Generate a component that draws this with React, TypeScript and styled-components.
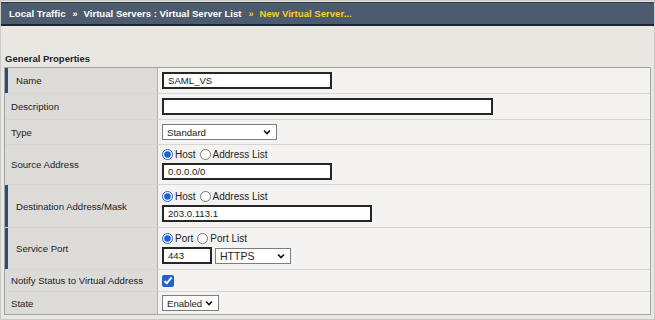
import React from "react"
import styled, { createGlobalStyle } from "styled-components"

const GlobalStyle = createGlobalStyle`
  html, body {
    margin: 0;
    padding: 0;
    background: #e8e7e2;
  }
  * {
    box-sizing: border-box;
  }
`

const Frame = styled.div`
  width: 655px;
  height: 320px;
  border: 1px solid #c9c9c6;
  background: #e8e7e2;
  font-family: "Liberation Sans", Arial, sans-serif;
  font-size: 9.6px;
  color: #222;
  overflow: hidden;
`

const Header = styled.div`
  display: flex;
  align-items: center;
  height: 24px;
  margin-top: 1px;
  padding-left: 8px;
  background: #4d5b6e;
  border-top: 1px solid #2c3849;
  border-bottom: 2px solid #1d2633;
  font-weight: bold;
  font-size: 9.6px;
  color: #fff;
  white-space: pre;
`

const Crumb = styled.span<{ $current?: boolean }>`
  color: ${(p) => (p.$current ? "#f7d21a" : "#ffffff")};
`

const Sep = styled.span<{ $current?: boolean }>`
  margin: 0 6px 0 7px;
  font-size: 9px;
  color: ${(p) => (p.$current ? "#f7d21a" : "#ffffff")};
`

const SectionTitle = styled.div`
  padding: 27px 0 0 4px;
  height: 41px;
  font-weight: bold;
  font-size: 9.5px;
  color: #222;
`

const Table = styled.div`
  margin: 0 3px 0 3px;
  border: 1px solid #a3a3a0;
  background: #f4f3f1;
`

const Row = styled.div<{ $h: number }>`
  display: flex;
  height: ${(p) => p.$h}px;
  border-bottom: 1px solid #d6d5d1;

  &:last-child {
    border-bottom: none;
  }
`

const Label = styled.div<{ $required?: boolean }>`
  display: flex;
  align-items: center;
  width: 153px;
  flex-shrink: 0;
  background: #dcdbd7;
  border-right: 1px solid #b2b1ad;
  padding-left: ${(p) => (p.$required ? "8px" : "6px")};
  border-left: ${(p) => (p.$required ? "3px solid #1f4f8f" : "none")};
`

const Value = styled.div`
  display: flex;
  flex-direction: column;
  justify-content: center;
  gap: 3px;
  padding-left: 4px;
  flex: 1;
`

const TextBox = styled.div<{ $w: number }>`
  display: flex;
  align-items: center;
  width: ${(p) => p.$w}px;
  height: 17px;
  padding-left: 4px;
  background: #fff;
  border: 2px solid #262626;
  color: #222;
`

const InlineRow = styled.div`
  display: flex;
  align-items: center;
  gap: 3px;
`

const RadioLabel = styled.label`
  display: flex;
  align-items: center;
`

const Radio = styled.input.attrs({ type: "radio" })`
  width: 11px;
  height: 11px;
  margin: 0 2px 0 0;
  accent-color: #1a62d8;
`

const RadioText = styled.span`
  font-size: 10px;
  margin-right: 1px;
`

const Check = styled.input.attrs({ type: "checkbox" })`
  width: 12px;
  height: 12px;
  margin: 0;
  accent-color: #1f5fcf;
`

const SelectBox = styled.div<{ $w: number; $large?: boolean }>`
  display: flex;
  align-items: center;
  justify-content: space-between;
  width: ${(p) => p.$w}px;
  height: 16px;
  padding: 0 5px 0 4px;
  background: #fff;
  border: 1px solid #7d7d7d;
  font-size: ${(p) => (p.$large ? "10.5px" : "9.6px")};
  color: #222;
`

const Chevron = () => (
  <svg width="8" height="6" viewBox="0 0 8 6">
    <path d="M1 1.5 L4 4.5 L7 1.5" fill="none" stroke="#111" strokeWidth="1.6" />
  </svg>
)

const Select: React.FC<{ w: number; value: string; large?: boolean }> = ({ w, value, large }) => (
  <SelectBox $w={w} $large={large}>
    <span>{value}</span>
    <Chevron />
  </SelectBox>
)

const RadioPair: React.FC<{ name: string; a: string; b: string }> = ({ name, a, b }) => (
  <InlineRow>
    <RadioLabel>
      <Radio name={name} defaultChecked />
      <RadioText>{a}</RadioText>
    </RadioLabel>
    <RadioLabel>
      <Radio name={name} />
      <RadioText>{b}</RadioText>
    </RadioLabel>
  </InlineRow>
)

export default function App() {
  return (
    <>
      <GlobalStyle />
      <Frame>
        <Header>
          <Crumb>Local Traffic</Crumb>
          <Sep>»</Sep>
          <Crumb>Virtual Servers : Virtual Server List</Crumb>
          <Sep $current>»</Sep>
          <Crumb $current>New Virtual Server...</Crumb>
        </Header>
        <SectionTitle>General Properties</SectionTitle>
        <Table>
          <Row $h={26}>
            <Label $required>Name</Label>
            <Value>
              <TextBox $w={170}>SAML_VS</TextBox>
            </Value>
          </Row>
          <Row $h={26}>
            <Label>Description</Label>
            <Value>
              <TextBox $w={331} />
            </Value>
          </Row>
          <Row $h={25}>
            <Label>Type</Label>
            <Value>
              <Select w={115} value="Standard" />
            </Value>
          </Row>
          <Row $h={40}>
            <Label>Source Address</Label>
            <Value>
              <RadioPair name="src" a="Host" b="Address List" />
              <TextBox $w={170}>0.0.0.0/0</TextBox>
            </Value>
          </Row>
          <Row $h={43}>
            <Label $required>Destination Address/Mask</Label>
            <Value>
              <RadioPair name="dst" a="Host" b="Address List" />
              <TextBox $w={210}>203.0.113.1</TextBox>
            </Value>
          </Row>
          <Row $h={42}>
            <Label $required>Service Port</Label>
            <Value>
              <RadioPair name="port" a="Port" b="Port List" />
              <InlineRow>
                <TextBox $w={50}>443</TextBox>
                <Select w={76} value="HTTPS" large />
              </InlineRow>
            </Value>
          </Row>
          <Row $h={22}>
            <Label>Notify Status to Virtual Address</Label>
            <Value>
              <Check defaultChecked />
            </Value>
          </Row>
          <Row $h={22}>
            <Label>State</Label>
            <Value>
              <Select w={57} value="Enabled" />
            </Value>
          </Row>
        </Table>
      </Frame>
    </>
  )
}
